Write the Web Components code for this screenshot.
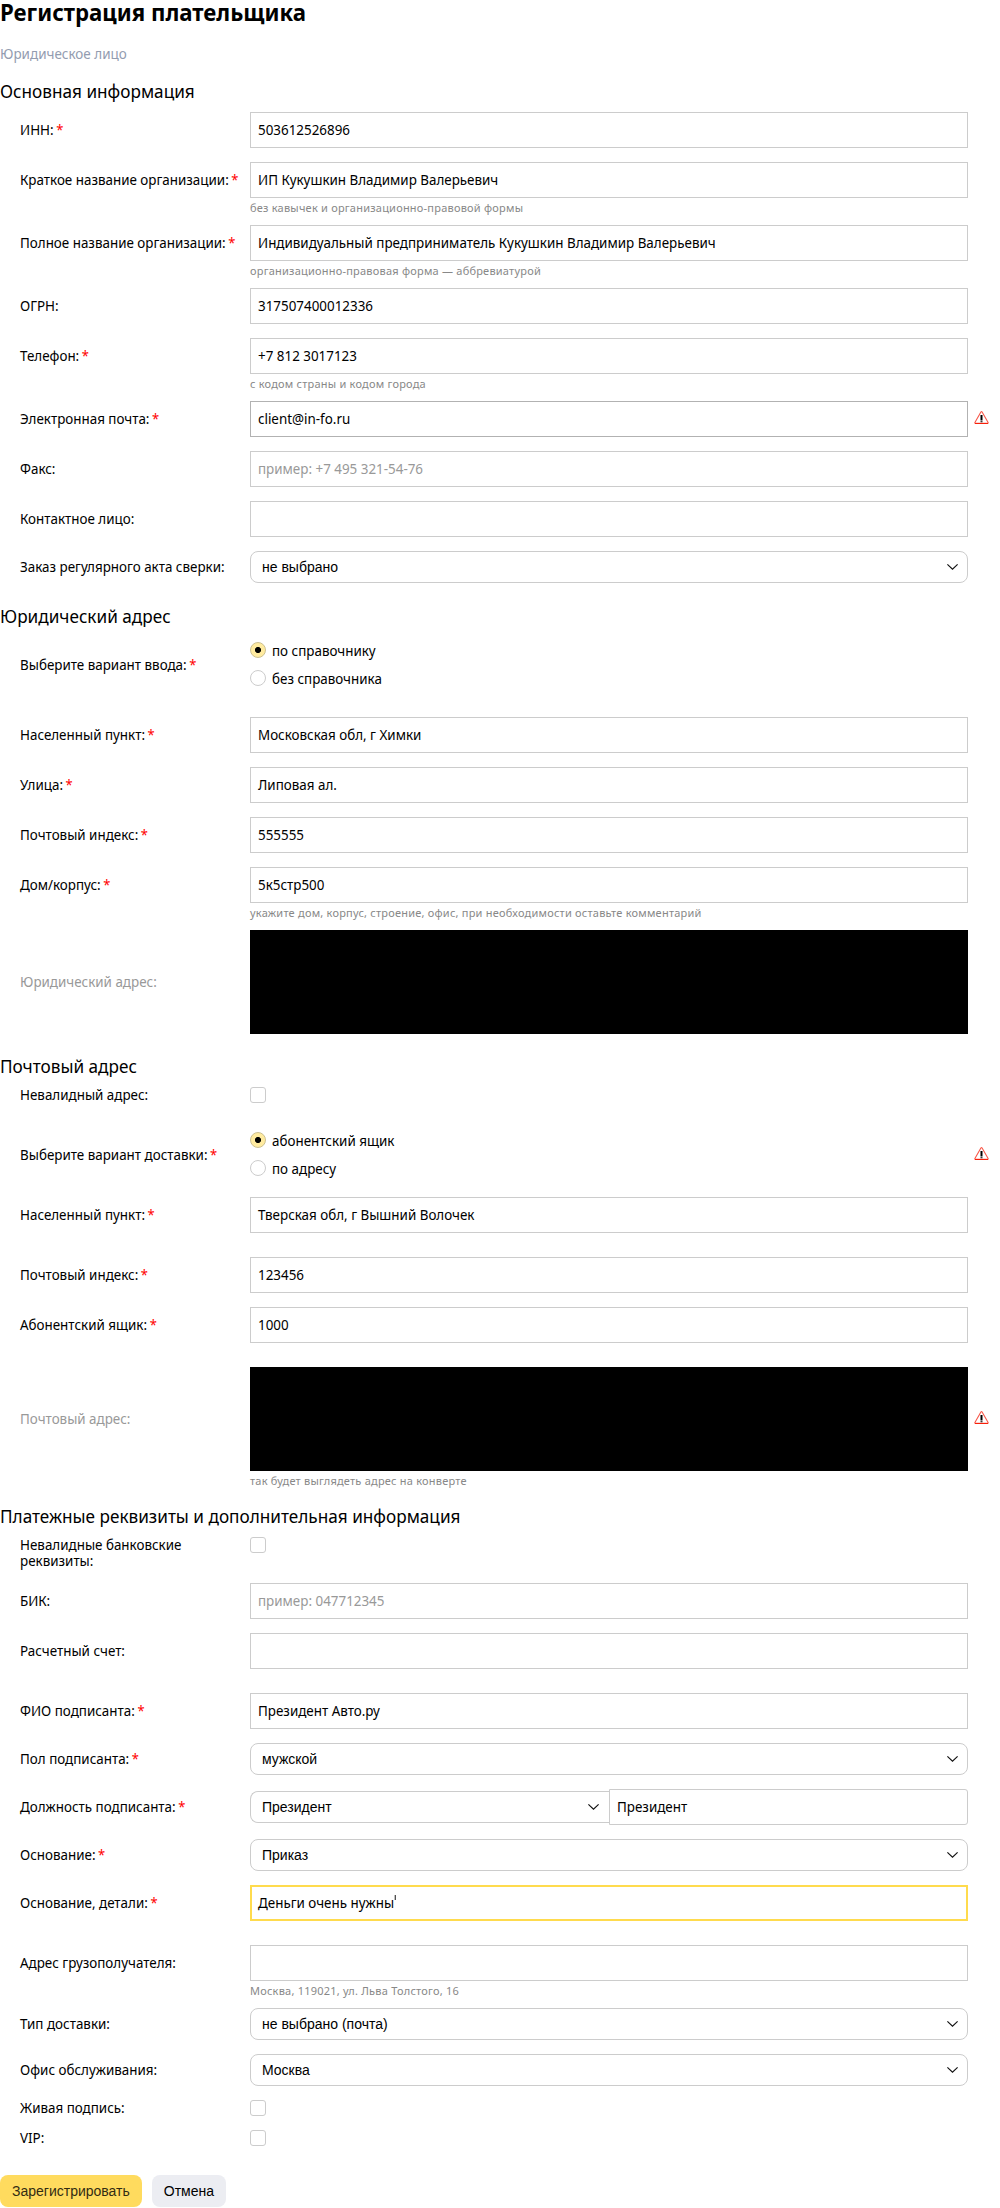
<!DOCTYPE html>
<html lang="ru"><head><meta charset="utf-8"><title>Регистрация плательщика</title>
<style>
body{margin:0;background:#fff;color:#000;font:14.5px/16px "Noto Sans",sans-serif}
</style></head><body>
<payer-form></payer-form>
<script>
const define=(name,html,init)=>{
  const t=document.createElement('template');t.innerHTML=html;
  customElements.define(name,class extends HTMLElement{
    connectedCallback(){
      if(this.shadowRoot)return;
      const r=this.attachShadow({mode:'open'});
      r.append(t.content.cloneNode(true));
      if(init)init(this,r);
    }
  });
};

define('narrow-text',`<style>:host{display:inline-block;transform:translateY(var(--shift,-1px)) scaleX(var(--narrow,.924));transform-origin:0 50%}</style><slot></slot>`);

define('warn-icon',`<style>:host{display:block;width:15px;height:13px}svg{display:block}</style>
<svg width="15" height="13" viewBox="0 0 15 13"><path d="M6.9 1Q7.5.2 8.1 1L14.1 11.4Q14.4 12.4 13.4 12.4H1.6Q.6 12.4.9 11.4Z" fill="#fff" stroke="#f8584a" stroke-width="1.1" stroke-linejoin="round"/><path d="M1 12.5h13" stroke="#f8200a"/><path d="M6.5 4h2v5.5h-2zM6.5 10.2h2v1.1h-2z" fill="#000"/></svg>`);

define('text-field',`<style>
:host{display:block;flex:1;box-sizing:border-box;height:36px;border:1px solid #ccc;padding:0 7px;line-height:34px;white-space:nowrap;background:#fff}
:host([hover]){border-color:#b2b2b2}
:host([placeholder]){color:#999}
:host([focused]){border:2px solid #ffdb4d;padding:0 6px;line-height:32px}
:host([joined]){border-radius:0 3px 3px 0}
.caret{display:none;width:1px;height:5px;background:#000;vertical-align:8px;margin-left:1px}
:host([focused]) .caret{display:inline-block}
</style><narrow-text><slot></slot><span class="caret"></span></narrow-text>`);

define('select-field',`<style>
:host{display:flex;flex:1;box-sizing:border-box;height:32px;border:1px solid #ccc;border-radius:8px;padding:0 9px 0 11px;align-items:center;justify-content:space-between;font-family:"Liberation Sans",sans-serif;font-size:14px}
:host([joined]){flex:0 0 359px;border-right:0;border-radius:8px 0 0 8px;padding-right:10px}
svg{display:block}
</style><slot></slot><svg width="11" height="6" viewBox="0 0 11 6"><path d="M.4.4 5.5 5.2 10.6.4" fill="none" stroke="#111" stroke-width="1.15"/></svg>`);

define('check-box',`<style>:host{display:block;box-sizing:border-box;width:16px;height:16px;border:1px solid #ccc;border-radius:3px}</style>`);

define('radio-item',`<style>
:host{display:flex;align-items:center;height:16px;gap:6px}
i{display:block;box-sizing:border-box;width:16px;height:16px;border:1px solid #ccc;border-radius:50%}
:host([checked]) i{border-color:#ccc08f;background:radial-gradient(circle,#000 2.7px,#ffeba0 3.4px)}
span{padding-top:2px}
</style><i></i><span><narrow-text><slot></slot></narrow-text></span>`);

define('radio-list',`<style>:host{display:flex;flex-direction:column;gap:12px}</style><slot></slot>`);
define('black-box',`<style>:host{display:block;flex:1;height:104px;background:#000}</style>`);

define('form-row',`<style>
:host{display:block;margin-top:14px}
.line{display:flex;align-items:center}
:host([top]) .line{align-items:flex-start}
.label{box-sizing:border-box;flex:0 0 250px;width:250px;min-width:0;padding-left:20px;white-space:nowrap}
:host([wrap]) .label{white-space:normal;padding-right:40px}
:host([low]) .label{padding-top:2px}
:host([muted]) .label{color:#999}
b{font-weight:400;color:#f00;font-size:14px;margin-left:-1px}
.ctl{flex:0 0 718px;display:flex;align-items:center}
warn-icon{margin:-3px 0 0 6px}
:host([low]) warn-icon{margin-top:-1px}
.hint{height:13px;margin-left:250px;line-height:19px;font-size:11px;letter-spacing:.22px;color:#888;white-space:nowrap}
</style>
<div class="line"><div class="label"><narrow-text></narrow-text></div><div class="ctl"><slot></slot></div></div>`,(el,r)=>{
  const l=r.querySelector('narrow-text');
  l.textContent=el.getAttribute('label')+':';
  if(el.hasAttribute('required')){const b=document.createElement('b');b.textContent='*';l.append(' ',b)}
  if(el.hasAttribute('warn'))r.querySelector('.line').append(document.createElement('warn-icon'));
  if(el.hasAttribute('hint')){const h=document.createElement('div');h.className='hint';h.textContent=el.getAttribute('hint');r.append(h)}
  if(el.hasAttribute('gap'))el.style.marginTop=el.getAttribute('gap')+'px';
});

define('form-section',`<style>
:host{display:block;margin-top:24px}
h2{margin:0;padding-bottom:2px;font-size:18.5px;line-height:18px;font-weight:400;white-space:nowrap;--shift:0px;--narrow:.928}
</style><h2><narrow-text></narrow-text></h2><slot></slot>`,(el,r)=>{r.querySelector('narrow-text').textContent=el.getAttribute('heading')});

define('form-button',`<style>
:host{display:block;height:32px;line-height:32px;border-radius:8px;padding:0 12px;background:#ecedf2;font-family:"Liberation Sans",sans-serif;font-size:14px}
:host([primary]){background:#ffdb5e;color:#332c13}
</style><slot></slot>`);

define('payer-form',`<style>
:host{display:block;height:2208px}
h1{margin:0;font-size:24px;line-height:24px;font-weight:700;--shift:0px;--narrow:.926}
.type{margin-top:22px;line-height:16px;color:#939cb0;--narrow:.928}
.first{margin-top:20px}
.actions{display:flex;gap:10px;margin-top:29px}
</style>
<h1><narrow-text>Регистрация плательщика</narrow-text></h1>
<div class="type"><narrow-text>Юридическое лицо</narrow-text></div>
<form-section class="first" heading="Основная информация">
<form-row label="ИНН" required gap="10"><text-field>503612526896</text-field></form-row>
<form-row label="Краткое название организации" required hint="без кавычек и организационно-правовой формы"><text-field>ИП Кукушкин Владимир Валерьевич</text-field></form-row>
<form-row label="Полное название организации" required hint="организационно-правовая форма — аббревиатурой"><text-field>Индивидуальный предприниматель Кукушкин Владимир Валерьевич</text-field></form-row>
<form-row label="ОГРН"><text-field>317507400012336</text-field></form-row>
<form-row label="Телефон" required hint="с кодом страны и кодом города"><text-field>+7 812 3017123</text-field></form-row>
<form-row label="Электронная почта" required warn><text-field hover>client@in-fo.ru</text-field></form-row>
<form-row label="Факс"><text-field placeholder>пример: +7 495 321-54-76</text-field></form-row>
<form-row label="Контактное лицо"><text-field></text-field></form-row>
<form-row label="Заказ регулярного акта сверки"><select-field>не выбрано</select-field></form-row>
</form-section>
<form-section heading="Юридический адрес">
<form-row label="Выберите вариант ввода" required low gap="15"><radio-list><radio-item checked>по справочнику</radio-item><radio-item>без справочника</radio-item></radio-list></form-row>
<form-row label="Населенный пункт" required gap="31"><text-field>Московская обл, г Химки</text-field></form-row>
<form-row label="Улица" required><text-field>Липовая ал.</text-field></form-row>
<form-row label="Почтовый индекс" required><text-field>555555</text-field></form-row>
<form-row label="Дом/корпус" required hint="укажите дом, корпус, строение, офис, при необходимости оставьте комментарий"><text-field>5к5стр500</text-field></form-row>
<form-row label="Юридический адрес" muted><black-box></black-box></form-row>
</form-section>
<form-section heading="Почтовый адрес" style="margin-top:23px">
<form-row label="Невалидный адрес" gap="10"><check-box></check-box></form-row>
<form-row label="Выберите вариант доставки" required warn low gap="29"><radio-list><radio-item checked>абонентский ящик</radio-item><radio-item>по адресу</radio-item></radio-list></form-row>
<form-row label="Населенный пункт" required gap="21"><text-field>Тверская обл, г Вышний Волочек</text-field></form-row>
<form-row label="Почтовый индекс" required gap="24"><text-field>123456</text-field></form-row>
<form-row label="Абонентский ящик" required><text-field>1000</text-field></form-row>
<form-row label="Почтовый адрес" muted warn gap="24" hint="так будет выглядеть адрес на конверте"><black-box></black-box></form-row>
</form-section>
<form-section heading="Платежные реквизиты и дополнительная информация" style="margin-top:23px">
<form-row label="Невалидные банковские реквизиты" top wrap gap="10"><check-box></check-box></form-row>
<form-row label="БИК"><text-field placeholder>пример: 047712345</text-field></form-row>
<form-row label="Расчетный счет"><text-field></text-field></form-row>
<form-row label="ФИО подписанта" required gap="24"><text-field>Президент Авто.ру</text-field></form-row>
<form-row label="Пол подписанта" required><select-field>мужской</select-field></form-row>
<form-row label="Должность подписанта" required><select-field joined>Президент</select-field><text-field joined>Президент</text-field></form-row>
<form-row label="Основание" required><select-field>Приказ</select-field></form-row>
<form-row label="Основание, детали" required><text-field focused>Деньги очень нужны</text-field></form-row>
<form-row label="Адрес грузополучателя" gap="24" hint="Москва, 119021, ул. Льва Толстого, 16"><text-field></text-field></form-row>
<form-row label="Тип доставки"><select-field>не выбрано (почта)</select-field></form-row>
<form-row label="Офис обслуживания"><select-field>Москва</select-field></form-row>
<form-row label="Живая подпись"><check-box></check-box></form-row>
<form-row label="VIP"><check-box></check-box></form-row>
</form-section>
<div class="actions"><form-button primary>Зарегистрировать</form-button><form-button>Отмена</form-button></div>`);
</script></body></html>
